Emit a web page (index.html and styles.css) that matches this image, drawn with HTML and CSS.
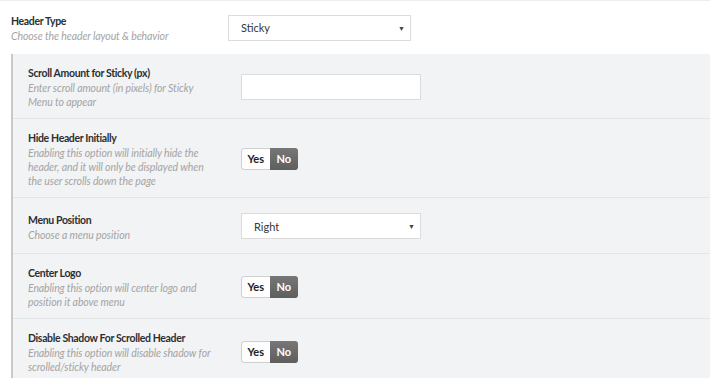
FILE: index.html
```html
<!DOCTYPE html>
<html lang="en">
<head>
    <meta charset="UTF-8">
    <meta name="viewport" content="width=device-width, initial-scale=1.0">
    <title>Header Options</title>
    <link rel="stylesheet" href="styles.css">
</head>
<body>
    <main class="options">
        <section class="row top">
            <div class="label">
                <h3>Header Type</h3>
                <p>Choose the header layout &amp; behavior</p>
            </div>
            <div class="field">
                <div class="select wide">Sticky<span class="caret">&#9660;</span></div>
            </div>
        </section>

        <section class="group">
            <div class="row">
                <div class="label">
                    <h3>Scroll Amount for Sticky (px)</h3>
                    <p>Enter scroll amount (in pixels) for Sticky<br>Menu to appear</p>
                </div>
                <div class="field">
                    <div class="input"></div>
                </div>
            </div>
            <div class="row">
                <div class="label">
                    <h3>Hide Header Initially</h3>
                    <p>Enabling this option will initially hide the<br>header, and it will only be displayed when<br>the user scrolls down the page</p>
                </div>
                <div class="field">
                    <div class="toggle"><span class="yes">Yes</span><span class="no">No</span></div>
                </div>
            </div>
            <div class="row">
                <div class="label">
                    <h3>Menu Position</h3>
                    <p>Choose a menu position</p>
                </div>
                <div class="field">
                    <div class="select">Right<span class="caret">&#9660;</span></div>
                </div>
            </div>
            <div class="row">
                <div class="label">
                    <h3>Center Logo</h3>
                    <p>Enabling this option will center logo and<br>position it above menu</p>
                </div>
                <div class="field">
                    <div class="toggle"><span class="yes">Yes</span><span class="no">No</span></div>
                </div>
            </div>
            <div class="row">
                <div class="label">
                    <h3>Disable Shadow For Scrolled Header</h3>
                    <p>Enabling this option will disable shadow for<br>scrolled/sticky header</p>
                </div>
                <div class="field">
                    <div class="toggle"><span class="yes">Yes</span><span class="no">No</span></div>
                </div>
            </div>
        </section>
    </main>
</body>
</html>
```

FILE: styles.css
```css
* {
    box-sizing: border-box;
    margin: 0;
    padding: 0;
}
body {
    background-color: #fff;
    color: #23282d;
    font-family: 'Lato', 'Open Sans', sans-serif;
    font-size: 11px;
}
.options {
    border-top: 1px solid #eee;
}
.row {
    display: grid;
    grid-template-columns: 213px 180px;
    align-items: center;
    min-height: 56px;
    padding: 12px 0 9px 15px;
    border-bottom: 1px solid #e4e5e7;
}
.row.top {
    grid-template-columns: 217px 183px;
    padding: 13px 0 11px 11px;
    min-height: 53px;
    border-bottom: none;
}
.field {
    margin-top: -2px;
}
.label h3 {
    font-size: 10.5px;
    font-weight: 700;
    letter-spacing: -0.35px;
    line-height: 15px;
    color: #2b2f33;
}
.label p {
    font-size: 10.5px;
    font-style: italic;
    letter-spacing: -0.1px;
    line-height: 14px;
    color: #a4a4a4;
}
.group {
    margin-left: 11px;
    background-color: #f2f3f5;
    border-left: 2px solid #c9c9c9;
}
.select,
.input {
    height: 26px;
    background: #fff;
    border: 1px solid #dcdcdc;
}
.select {
    display: flex;
    align-items: center;
    justify-content: space-between;
    padding: 0 5px 0 12px;
    font-size: 11px;
    color: #32373c;
}
.caret {
    font-size: 7px;
    color: #444;
}
.toggle {
    display: flex;
    width: 57px;
    height: 22px;
    border-radius: 3px;
    overflow: hidden;
    font-size: 11px;
    font-weight: 700;
}
.toggle span {
    display: flex;
    align-items: center;
    justify-content: center;
    width: 50%;
}
.yes {
    background: #fdfdfd;
    border: 1px solid #cfcfcf;
    border-right: none;
    border-radius: 3px 0 0 3px;
    color: #222;
}
.no {
    background: linear-gradient(#777, #5e5e5e);
    color: #fff;
}
```
